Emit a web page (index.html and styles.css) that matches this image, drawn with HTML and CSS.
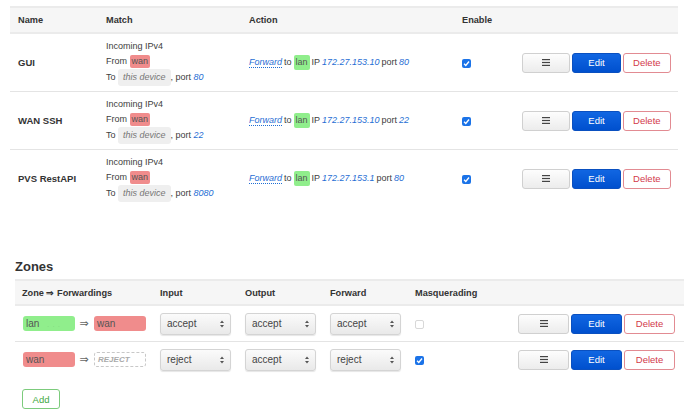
FILE: index.html
```html
<!DOCTYPE html>
<html>
<head>
<meta charset="utf-8">
<link rel="stylesheet" href="styles.css">
</head>
<body>
<div class="redirects">
  <table class="tbl rtbl">
    <colgroup><col class="c-name"><col class="c-match"><col class="c-action"><col class="c-enable"><col></colgroup>
    <thead>
      <tr><th>Name</th><th>Match</th><th>Action</th><th>Enable</th><th></th></tr>
    </thead>
    <tbody>
      <tr>
        <td class="name">GUI</td>
        <td class="match">
          <div>Incoming IPv4</div>
          <div>From <span class="zb zwan">wan</span></div>
          <div>To <span class="dev">this device</span>, port <i class="val">80</i></div>
        </td>
        <td class="action"><a class="fw">Forward</a> to <span class="zb zlan">lan</span> IP <i class="val">172.27.153.10</i> port <i class="val">80</i></td>
        <td><span class="cb on"><svg viewBox="0 0 10 10"><path d="M2.3 5.2 L4.2 7.1 L7.8 2.8" fill="none" stroke="#fff" stroke-width="1.5"/></svg></span></td>
        <td class="acts"><div class="btns"><span class="btn menu"><svg viewBox="0 0 8 7"><rect x="0" y="0" width="8" height="1.2"/><rect x="0" y="2.9" width="8" height="1.2"/><rect x="0" y="5.8" width="8" height="1.2"/></svg></span><span class="btn edit">Edit</span><span class="btn del">Delete</span></div></td>
      </tr>
      <tr>
        <td class="name">WAN SSH</td>
        <td class="match">
          <div>Incoming IPv4</div>
          <div>From <span class="zb zwan">wan</span></div>
          <div>To <span class="dev">this device</span>, port <i class="val">22</i></div>
        </td>
        <td class="action"><a class="fw">Forward</a> to <span class="zb zlan">lan</span> IP <i class="val">172.27.153.10</i> port <i class="val">22</i></td>
        <td><span class="cb on"><svg viewBox="0 0 10 10"><path d="M2.3 5.2 L4.2 7.1 L7.8 2.8" fill="none" stroke="#fff" stroke-width="1.5"/></svg></span></td>
        <td class="acts"><div class="btns"><span class="btn menu"><svg viewBox="0 0 8 7"><rect x="0" y="0" width="8" height="1.2"/><rect x="0" y="2.9" width="8" height="1.2"/><rect x="0" y="5.8" width="8" height="1.2"/></svg></span><span class="btn edit">Edit</span><span class="btn del">Delete</span></div></td>
      </tr>
      <tr class="last">
        <td class="name">PVS RestAPI</td>
        <td class="match">
          <div>Incoming IPv4</div>
          <div>From <span class="zb zwan">wan</span></div>
          <div>To <span class="dev">this device</span>, port <i class="val">8080</i></div>
        </td>
        <td class="action"><a class="fw">Forward</a> to <span class="zb zlan">lan</span> IP <i class="val">172.27.153.1</i> port <i class="val">80</i></td>
        <td><span class="cb on"><svg viewBox="0 0 10 10"><path d="M2.3 5.2 L4.2 7.1 L7.8 2.8" fill="none" stroke="#fff" stroke-width="1.5"/></svg></span></td>
        <td class="acts"><div class="btns"><span class="btn menu"><svg viewBox="0 0 8 7"><rect x="0" y="0" width="8" height="1.2"/><rect x="0" y="2.9" width="8" height="1.2"/><rect x="0" y="5.8" width="8" height="1.2"/></svg></span><span class="btn edit">Edit</span><span class="btn del">Delete</span></div></td>
      </tr>
    </tbody>
  </table>
</div>

<div class="zones">
  <h3>Zones</h3>
  <table class="tbl ztbl">
    <colgroup><col class="z-zone"><col class="z-sel"><col class="z-sel"><col class="z-sel"><col class="z-masq"><col></colgroup>
    <thead>
      <tr><th>Zone ⇒ Forwardings</th><th>Input</th><th>Output</th><th>Forward</th><th>Masquerading</th><th></th></tr>
    </thead>
    <tbody>
      <tr>
        <td><div class="fwd"><span class="zbox zlan">lan<span class="dots">. . .</span></span><span class="arr">⇒</span><span class="zbox zwan">wan</span></div></td>
        <td><div class="sel">accept<svg viewBox="0 0 5 9"><path d="M2.5 0 L5 3.4 L0 3.4Z M2.5 9 L5 5.6 L0 5.6Z"/></svg></div></td>
        <td><div class="sel">accept<svg viewBox="0 0 5 9"><path d="M2.5 0 L5 3.4 L0 3.4Z M2.5 9 L5 5.6 L0 5.6Z"/></svg></div></td>
        <td><div class="sel">accept<svg viewBox="0 0 5 9"><path d="M2.5 0 L5 3.4 L0 3.4Z M2.5 9 L5 5.6 L0 5.6Z"/></svg></div></td>
        <td><span class="cb off"></span></td>
        <td class="acts"><div class="btns zb2"><span class="btn menu"><svg viewBox="0 0 8 7"><rect x="0" y="0" width="8" height="1.2"/><rect x="0" y="2.9" width="8" height="1.2"/><rect x="0" y="5.8" width="8" height="1.2"/></svg></span><span class="btn edit">Edit</span><span class="btn del">Delete</span></div></td>
      </tr>
      <tr class="last">
        <td><div class="fwd"><span class="zbox zwan">wan</span><span class="arr">⇒</span><span class="zbox rej">REJECT</span></div></td>
        <td><div class="sel">reject<svg viewBox="0 0 5 9"><path d="M2.5 0 L5 3.4 L0 3.4Z M2.5 9 L5 5.6 L0 5.6Z"/></svg></div></td>
        <td><div class="sel">accept<svg viewBox="0 0 5 9"><path d="M2.5 0 L5 3.4 L0 3.4Z M2.5 9 L5 5.6 L0 5.6Z"/></svg></div></td>
        <td><div class="sel">reject<svg viewBox="0 0 5 9"><path d="M2.5 0 L5 3.4 L0 3.4Z M2.5 9 L5 5.6 L0 5.6Z"/></svg></div></td>
        <td><span class="cb on"><svg viewBox="0 0 10 10"><path d="M2.3 5.2 L4.2 7.1 L7.8 2.8" fill="none" stroke="#fff" stroke-width="1.5"/></svg></span></td>
        <td class="acts"><div class="btns zb2"><span class="btn menu"><svg viewBox="0 0 8 7"><rect x="0" y="0" width="8" height="1.2"/><rect x="0" y="2.9" width="8" height="1.2"/><rect x="0" y="5.8" width="8" height="1.2"/></svg></span><span class="btn edit">Edit</span><span class="btn del">Delete</span></div></td>
      </tr>
    </tbody>
  </table>
  <div class="addrow"><span class="btn add">Add</span></div>
</div>
</body>
</html>
```

FILE: styles.css
```css
html, body {
  margin: 0;
  padding: 0;
  background: #fff;
}
body {
  font-family: "Liberation Sans", Arial, sans-serif;
  font-size: 9px;
  color: #404040;
}
.redirects {
  padding: 6px 12px 0 10px;
}
.tbl {
  border-collapse: collapse;
  table-layout: fixed;
}
.rtbl { width: 668px; }
.tbl th {
  background: #f6f6f6;
  border-top: 2px solid #ebebeb;
  border-bottom: 2px solid #ebebeb;
  text-align: left;
  font-weight: bold;
  color: #333;
  padding: 0 8px;
  height: 24px;
  font-size: 9.2px;
}
.tbl td {
  border-bottom: 1px solid #e4e4e4;
  padding: 0 8px;
  vertical-align: middle;
}
.tbl tr.last td { border-bottom: none; }
.rtbl td { height: 57px; }
.c-name { width: 88px; }
.c-match { width: 143px; }
.c-action { width: 213px; }
.c-enable { width: 60px; }
.name { font-weight: bold; color: #333; font-size: 9.5px; }
.match div { line-height: 15px; white-space: nowrap; }
.action { word-spacing: -0.5px; white-space: nowrap; }
.zb {
  display: inline-block;
  padding: 0 2px;
  line-height: 13px;
  border-radius: 2px;
  color: #555;
  word-spacing: 0;
}
.zwan { background: #f08c8c; }
.zlan { background: #90ee8c; }
.rtbl .zlan { padding: 1px 2px; }
.dev {
  display: inline-block;
  background: #efefef;
  border-radius: 3px;
  padding: 0 5px;
  line-height: 17px;
  font-style: italic;
  color: #777;
}
.val { color: #1f6ed4; }
.fw {
  color: #1f6ed4;
  font-style: italic;
  text-decoration: underline dotted #1f6ed4;
  text-underline-offset: 2px;
}
.cb {
  display: inline-block;
  width: 9px;
  height: 9px;
  border-radius: 2px;
  vertical-align: middle;
  box-sizing: border-box;
}
.cb svg { display: block; width: 9px; height: 9px; }
.cb.on { background: #1b73e8; }
.cb.off { background: #fff; border: 1px solid #d8d8d8; }
.acts { padding-right: 7px !important; }
.btns {
  display: flex;
  justify-content: flex-end;
  gap: 2px;
}
.btn {
  box-sizing: border-box;
  width: 49px;
  height: 20px;
  border-radius: 3px;
  display: flex;
  align-items: center;
  justify-content: center;
  font-size: 9.5px;
}
.zb2 .btn { width: 51px; }
.menu {
  border: 1px solid #d0d0d0;
  background: linear-gradient(#fdfdfd, #ececec);
}
.menu svg { width: 8px; height: 7px; fill: #444; }
.edit {
  background: linear-gradient(#1166e2, #0050ce);
  border: 1px solid #0a50c0;
  color: #fff;
}
.del {
  background: #fff;
  border: 1px solid #e28b92;
  color: #d2394a;
}
.zones {
  padding: 52px 6px 0 15px;
}
.zones h3 {
  margin: 0 0 4px 0;
  font-size: 13px;
  line-height: 16px;
  color: #333;
}
.ztbl { width: 669px; }
.ztbl th { padding: 0 7px; height: 23px; }
.ztbl td { padding: 0 7px; height: 35px; }
.ztbl tr.last td { height: 35px; }
.z-zone { width: 138px; }
.z-sel { width: 85px; }
.z-masq { width: 91px; }
.ztbl .acts { padding-right: 9px !important; }
.fwd { display: flex; align-items: center; }
.zbox {
  box-sizing: border-box;
  width: 52px;
  height: 15px;
  border-radius: 3px;
  padding-left: 3px;
  line-height: 15px;
  font-size: 10px;
  color: #555;
  margin-left: 1px;
}
.dots {
  font-size: 6px;
  color: #78c878;
  margin-left: 8px;
  letter-spacing: 1px;
}
.arr {
  width: 18px;
  text-align: center;
  color: #666;
  font-size: 11px;
  font-family: "DejaVu Sans", sans-serif;
}
.rej {
  border: 1px dashed #c8c8c8;
  font-style: italic;
  font-weight: bold;
  color: #aaa;
  font-size: 8px;
  line-height: 13px;
  padding-left: 3px;
}
.sel {
  box-sizing: border-box;
  width: 71px;
  height: 22px;
  border: 1px solid #d4d4d4;
  border-radius: 3px;
  background: linear-gradient(#fbfbfb, #e9e9e9);
  box-shadow: 0 1px 1px rgba(0,0,0,0.1);
  display: flex;
  align-items: center;
  justify-content: space-between;
  padding: 0 6px;
  font-size: 10px;
  color: #444;
}
.sel svg { width: 4px; height: 8px; fill: #555; }
.addrow { padding: 12px 0 0 7px; }
.add {
  width: 38px;
  border: 1px solid #7ccb7c;
  background: #fff;
  color: #3ea83e;
  font-size: 9.5px;
}
```
